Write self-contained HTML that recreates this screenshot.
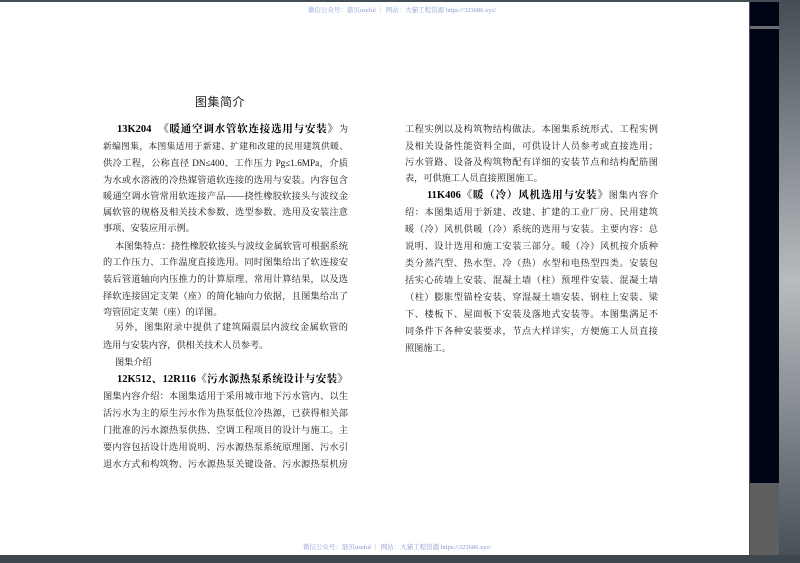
<!DOCTYPE html>
<html><head><meta charset="utf-8">
<style>
html,body{margin:0;padding:0}
body{width:800px;height:563px;position:relative;overflow:hidden;background:#454d55;font-family:"Liberation Serif","Noto Serif CJK SC",serif;}
.right{position:absolute;left:779px;top:0;width:21px;height:563px;background:linear-gradient(180deg,#454d55 0%,#8b9197 30%,#b8bcc0 50%,#8b9197 70%,#454d55 100%)}
.page{position:absolute;left:0;top:2px;width:749px;height:553px;background:#fff}
.strip{position:absolute;left:750px;top:2px;width:29px;height:481px;background:#000516}
.div{position:absolute;left:750px;top:26px;width:29px;height:3px;background:#6a6e74}
.gray{position:absolute;left:750px;top:483px;width:29px;height:72px;background:#5f5f5f}
.bot{position:absolute;left:0;top:555px;width:800px;height:8px;background:#3e464e}
.wm{position:absolute;font-family:"Liberation Serif","Noto Serif CJK SC",serif;font-size:6.5px;color:#8a9ad0;white-space:nowrap}
.l{position:absolute;font-size:9.2px;line-height:14px;color:#151515;text-align:justify;text-align-last:justify;overflow:visible}
.L{left:103px;width:245px}
.R{left:405px;width:253px}
.b{font-weight:bold;color:#000;font-size:10.5px}
.h{position:absolute;left:195px;top:93px;font-family:"Liberation Sans","Noto Sans CJK SC",sans-serif;font-size:12px;color:#222;letter-spacing:0.5px}
.n{width:auto;text-align-last:auto;white-space:nowrap}
</style></head><body>
<div class="right"></div>
<div class="page"></div>
<div class="strip"></div><div class="div"></div><div class="gray"></div>
<div class="bot"></div>
<div class="wm" style="left:308px;top:5px">微信公众号：筋贝useful ｜ 网站：大猫工程资源 https://323686.xyz/</div>
<div class="wm" style="left:303px;top:542px">微信公众号：筋贝useful ｜ 网站：大猫工程资源 https://323686.xyz/</div>
<div class="h">图集简介</div>

<div class="l L" style="top:122px;left:117px;width:231px"><span class="b">13K204　《暖通空调水管软连接选用与安装》</span>为</div>
<div class="l L" style="top:139px;font-size:8.8px">新编图集，本图集适用于新建、扩建和改建的民用建筑供暖、</div>
<div class="l L" style="top:156px">供冷工程，公称直径 DN≤400、工作压力 Pg≤1.6MPa，介质</div>
<div class="l L" style="top:173px">为水或水溶液的冷热媒管道软连接的选用与安装。内容包含</div>
<div class="l L" style="top:189px">暖通空调水管常用软连接产品——挠性橡胶软接头与波纹金</div>
<div class="l L" style="top:205px">属软管的规格及相关技术参数、选型参数、选用及安装注意</div>
<div class="l L n" style="top:221px">事项、安装应用示例。</div>
<div class="l L" style="top:239px;left:115px;width:233px">本图集特点：挠性橡胶软接头与波纹金属软管可根据系统</div>
<div class="l L" style="top:255px">的工作压力、工作温度直接选用。同时图集给出了软连接安</div>
<div class="l L" style="top:272px">装后管道轴向内压推力的计算原理、常用计算结果，以及选</div>
<div class="l L" style="top:289px">择软连接固定支架（座）的简化轴向力依据，且图集给出了</div>
<div class="l L n" style="top:305px">弯管固定支架（座）的详图。</div>
<div class="l L" style="top:320px;left:115px;width:233px">另外，图集附录中提供了建筑隔震层内波纹金属软管的</div>
<div class="l L n" style="top:338px">选用与安装内容，供相关技术人员参考。</div>
<div class="l L n" style="top:355px;left:115px">图集介绍</div>
<div class="l L" style="top:372px;left:117px;width:231px"><span class="b">12K512、12R116《污水源热泵系统设计与安装》</span></div>
<div class="l L" style="top:389px">图集内容介绍：本图集适用于采用城市地下污水管内、以生</div>
<div class="l L" style="top:406px">活污水为主的原生污水作为热泵低位冷热源，已获得相关部</div>
<div class="l L" style="top:423px">门批准的污水源热泵供热、空调工程项目的设计与施工。主</div>
<div class="l L" style="top:440px">要内容包括设计选用说明、污水源热泵系统原理图、污水引</div>
<div class="l L" style="top:457px">退水方式和构筑物、污水源热泵关键设备、污水源热泵机房</div>

<div class="l R" style="top:122px">工程实例以及构筑物结构做法。本图集系统形式、工程实例</div>
<div class="l R" style="top:139px">及相关设备性能资料全面，可供设计人员参考或直接选用；</div>
<div class="l R" style="top:155px">污水管路、设备及构筑物配有详细的安装节点和结构配筋图</div>
<div class="l R n" style="top:171px">表，可供施工人员直接照图施工。</div>
<div class="l R" style="top:188px;left:427px;width:231px"><span class="b">11K406《暖（冷）风机选用与安装》</span>图集内容介</div>
<div class="l R" style="top:205px">绍：本图集适用于新建、改建、扩建的工业厂房、民用建筑</div>
<div class="l R" style="top:222px">暖（冷）风机供暖（冷）系统的选用与安装。主要内容：总</div>
<div class="l R" style="top:239px">说明、设计选用和施工安装三部分。暖（冷）风机按介质种</div>
<div class="l R" style="top:256px">类分蒸汽型、热水型、冷（热）水型和电热型四类。安装包</div>
<div class="l R" style="top:273px">括实心砖墙上安装、混凝土墙（柱）预埋件安装、混凝土墙</div>
<div class="l R" style="top:290px">（柱）膨胀型锚栓安装、穿湿凝土墙安装、钢柱上安装、梁</div>
<div class="l R" style="top:307px">下、楼板下、屋面板下安装及落地式安装等。本图集满足不</div>
<div class="l R" style="top:324px">同条件下各种安装要求，节点大样详实，方便施工人员直接</div>
<div class="l R n" style="top:341px">照图施工。</div>
</body></html>
